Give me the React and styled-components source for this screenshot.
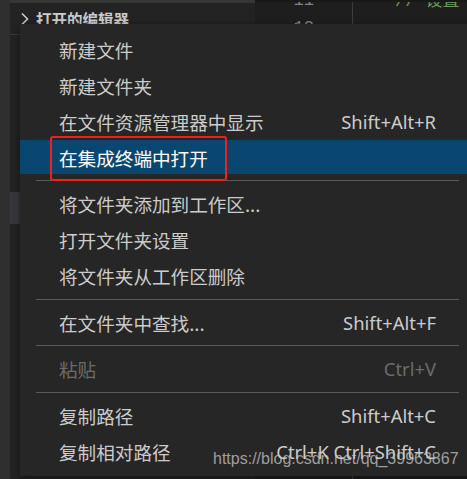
import React from 'react'
import styled, { createGlobalStyle } from 'styled-components'

const GlobalStyle = createGlobalStyle`
  html, body {
    margin: 0;
    padding: 0;
    background: #232323;
    overflow: hidden;
  }
`

const Workbench = styled.div`
  position: relative;
  display: flex;
  width: 467px;
  height: 479px;
  overflow: hidden;
  font-family: "Noto Sans", "Noto Sans CJK SC", sans-serif;
`

const ActivityStrip = styled.div`
  width: 10px;
  flex-shrink: 0;
  background: #2f2f2f;
`

const Sidebar = styled.div`
  width: 245px;
  flex-shrink: 0;
  background: #232323;
  border-top: 3px solid #363636;
  display: flex;
  flex-direction: column;
`

const SectionHeader = styled.div`
  height: 31px;
  display: flex;
  align-items: center;
  gap: 6px;
  padding-left: 10px;
  color: #cccccc;
  font-family: "Noto Sans CJK SC", sans-serif;
  font-size: 15.5px;
  font-weight: 700;
  border-bottom: ${p => (p.$divided ? '1px solid #3a3a3a' : 'none')};
`

const Chevron = styled.svg`
  width: 10px;
  height: 14px;
  flex-shrink: 0;
`

const ListSpacer = styled.div`
  height: ${p => p.$h}px;
`

const SelectedItem = styled.div`
  height: 32px;
  background: #37373d;
`

const Editor = styled.div`
  flex: 1;
  background: #1e1e1e;
  border-top: 2px solid #181818;
  display: flex;
  overflow: hidden;
`

const Gutter = styled.div`
  width: 98px;
  border-right: 1px solid #3c3c3c;
  padding-right: 38px;
  box-sizing: border-box;
  text-align: right;
  color: #858585;
  font-family: "Liberation Mono", monospace;
  font-size: 17px;
  line-height: 27px;
  margin-top: -15px;
`

const Code = styled.div`
  padding-left: 42px;
  color: #6a9955;
  font-family: "Liberation Mono", "Noto Sans CJK SC", monospace;
  font-size: 17px;
  line-height: 27px;
  margin-top: -14px;
  white-space: nowrap;
`

const Menu = styled.div`
  position: absolute;
  left: 20px;
  top: 24px;
  width: 455px;
  padding: 7px 0;
  background: #262626;
  box-shadow: 0 2px 8px rgba(0, 0, 0, 0.45);
`

const Item = styled.div`
  position: relative;
  height: 36px;
  box-sizing: border-box;
  border: 1px solid transparent;
  border-width: 1px 0;
  background-clip: padding-box;
  padding: 0 39px;
  display: flex;
  align-items: center;
  justify-content: space-between;
  background-color: ${p => (p.$active ? '#094771' : 'transparent')};
  color: ${p => (p.$disabled ? '#6b6b6b' : p.$active ? '#ffffff' : '#cccccc')};
`

const Label = styled.span`
  font-family: "Noto Sans CJK SC", sans-serif;
  font-size: 18.6px;
`

const Keys = styled.span`
  font-family: "Noto Sans", sans-serif;
  font-size: 18.4px;
`

const Separator = styled.div`
  height: 1px;
  margin: 5px 16px 4.5px;
  background: #5a5a5a;
`

const Highlight = styled.div`
  position: absolute;
  left: 30px;
  top: -4px;
  width: 177px;
  height: 45px;
  box-sizing: border-box;
  border: 2px solid #f02020;
  border-radius: 3px;
`

const Watermark = styled.div`
  position: absolute;
  left: 213px;
  top: 450px;
  color: rgba(200, 200, 200, 0.75);
  font-family: "Liberation Sans", Arial, sans-serif;
  font-size: 16px;
  white-space: nowrap;
`

const groups = [
  [
    { label: '新建文件' },
    { label: '新建文件夹' },
    { label: '在文件资源管理器中显示', keys: 'Shift+Alt+R' },
    { label: '在集成终端中打开', active: true, marked: true },
  ],
  [
    { label: '将文件夹添加到工作区...' },
    { label: '打开文件夹设置' },
    { label: '将文件夹从工作区删除' },
  ],
  [{ label: '在文件夹中查找...', keys: 'Shift+Alt+F' }],
  [{ label: '粘贴', keys: 'Ctrl+V', disabled: true }],
  [
    { label: '复制路径', keys: 'Shift+Alt+C' },
    { label: '复制相对路径', keys: 'Ctrl+K Ctrl+Shift+C' },
  ],
]

const App = () => {
  return <Workbench>
    <GlobalStyle />
    <ActivityStrip />
    <Sidebar>
      <SectionHeader $divided>
        <Chevron viewBox="0 0 10 14">
          <path d="M2 1.5 L7.5 7 L2 12.5" fill="none" stroke="#cccccc" strokeWidth="1.6" />
        </Chevron>
        打开的编辑器
      </SectionHeader>
      <SectionHeader>
        <Chevron viewBox="0 0 10 14">
          <path d="M1 4.5 L5 9 L9 4.5" fill="none" stroke="#cccccc" strokeWidth="1.6" />
        </Chevron>
      </SectionHeader>
      <ListSpacer $h={126} />
      <SelectedItem />
    </Sidebar>
    <Editor>
      <Gutter>
        <div>11</div>
        <div>12</div>
      </Gutter>
      <Code>
        <div>// 设置</div>
      </Code>
    </Editor>

    <Menu>
      {groups.map((group, gi) => (
        <React.Fragment key={gi}>
          {gi > 0 && <Separator />}
          {group.map((item) => (
            <Item key={item.label} $active={item.active} $disabled={item.disabled}>
              <Label>{item.label}</Label>
              {item.keys && <Keys>{item.keys}</Keys>}
              {item.marked && <Highlight />}
            </Item>
          ))}
        </React.Fragment>
      ))}
    </Menu>

    <Watermark>https://blog.csdn.net/qq_39963867</Watermark>
  </Workbench>
}

export default App
